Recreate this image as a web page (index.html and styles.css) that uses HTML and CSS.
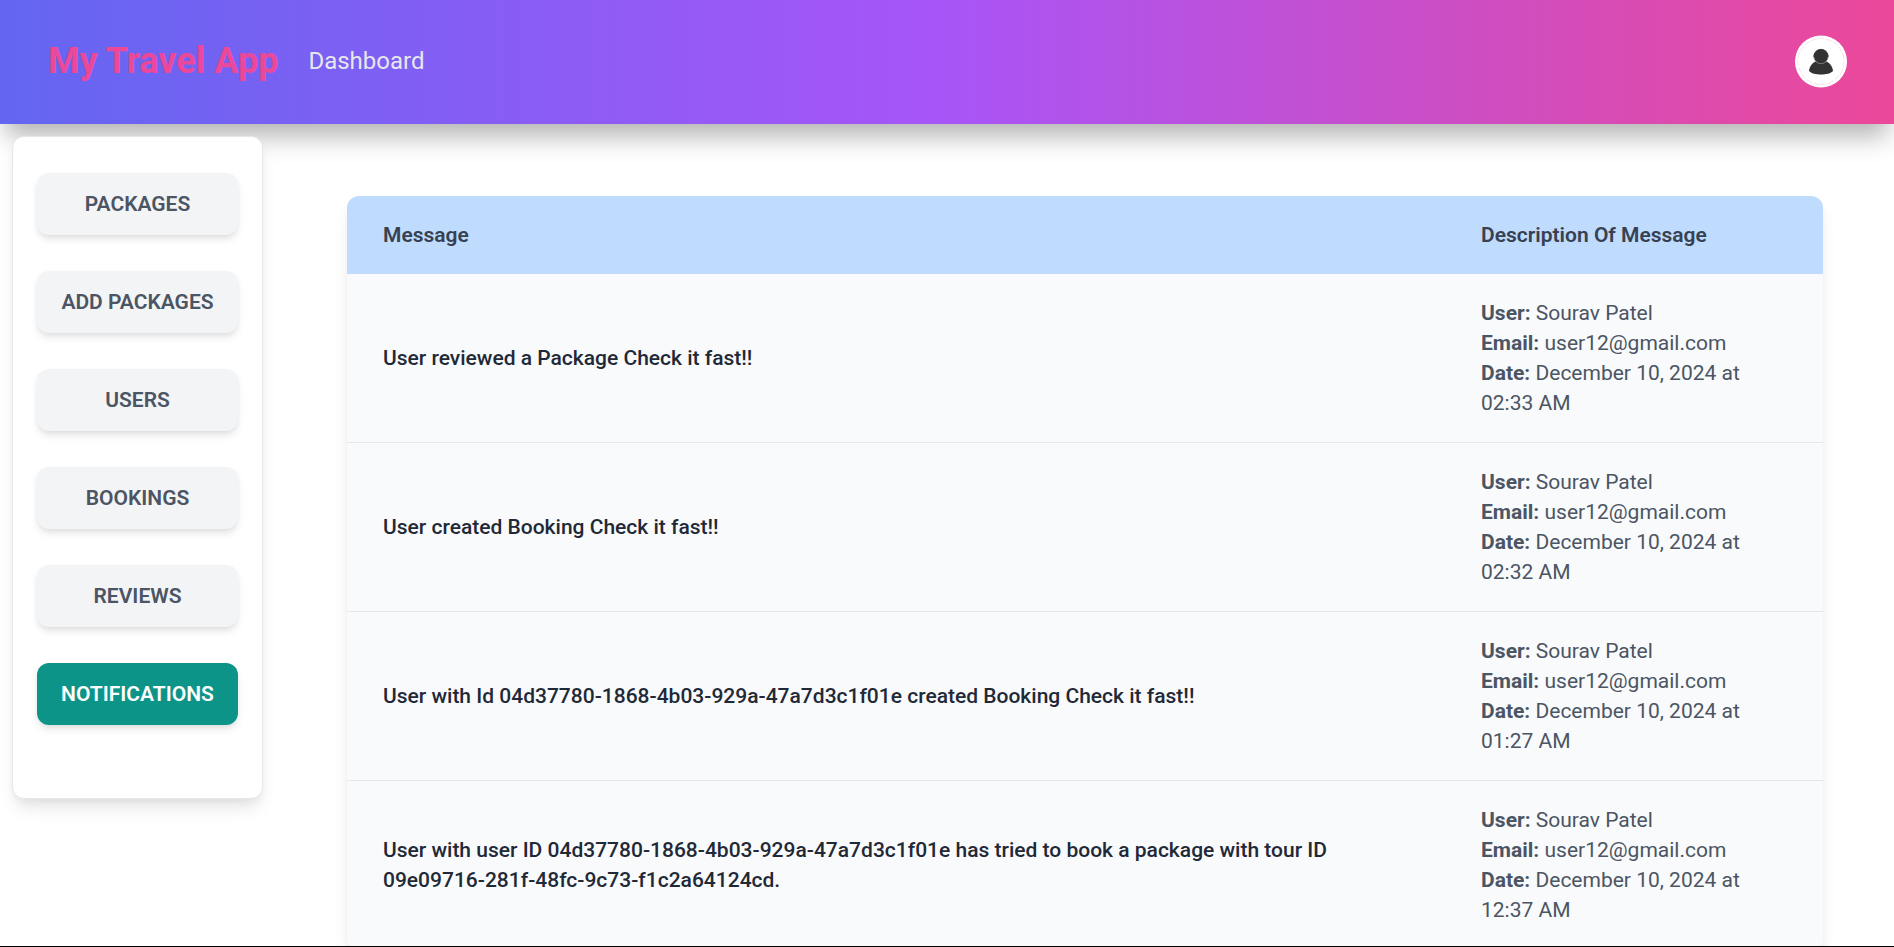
FILE: index.html
```html
<!DOCTYPE html>
<html lang="en">
<head>
<meta charset="utf-8">
<title>My Travel App</title>
<link rel="stylesheet" href="styles.css">
</head>
<body>
<header class="topbar">
  <div class="topbar-left">
    <h1 class="brand">My Travel App</h1>
    <a class="nav-link" href="#">Dashboard</a>
  </div>
  <button class="avatar" type="button" aria-label="Account">
    <svg viewBox="0 0 52 52" aria-hidden="true">
      <circle cx="26" cy="26" r="26" fill="#fff"/>
      <circle cx="26" cy="26" r="23" fill="none" stroke="#f9cfe2" stroke-width=".7" stroke-dasharray="6 1.500"/>
      <path d="M14 35.500C14.500 31 17 27.500 20.500 26h11C35 27.500 37.500 31 38 35.500 36 38 31 39 26 39s-10-1-12-3.500z" fill="#333"/>
      <circle cx="26" cy="21" r="7.200" fill="#333" stroke="#999" stroke-width=".7"/>
      <path d="M18.900 21a7.100 7.100 0 0 1 14.200 0z" fill="#333" stroke="#333" stroke-width=".9"/>
    </svg>
  </button>
</header>
<div class="layout">
  <nav class="sidebar">
    <button class="side-btn" type="button">PACKAGES</button>
    <button class="side-btn" type="button">ADD PACKAGES</button>
    <button class="side-btn" type="button">USERS</button>
    <button class="side-btn" type="button">BOOKINGS</button>
    <button class="side-btn" type="button">REVIEWS</button>
    <button class="side-btn active" type="button">NOTIFICATIONS</button>
  </nav>
  <main class="content">
    <div class="card">
      <table class="messages">
        <thead>
          <tr><th class="col-message">Message</th><th class="col-desc">Description Of Message</th></tr>
        </thead>
        <tbody>
          <tr>
            <td class="message">User reviewed a Package Check it fast!!</td>
            <td><p><strong>User:</strong> Sourav Patel</p><p><strong>Email:</strong> user12@gmail.com</p><p><strong>Date:</strong> December 10, 2024 at 02:33 AM</p></td>
          </tr>
          <tr>
            <td class="message">User created Booking Check it fast!!</td>
            <td><p><strong>User:</strong> Sourav Patel</p><p><strong>Email:</strong> user12@gmail.com</p><p><strong>Date:</strong> December 10, 2024 at 02:32 AM</p></td>
          </tr>
          <tr>
            <td class="message">User with Id 04d37780-1868-4b03-929a-47a7d3c1f01e created Booking Check it fast!!</td>
            <td><p><strong>User:</strong> Sourav Patel</p><p><strong>Email:</strong> user12@gmail.com</p><p><strong>Date:</strong> December 10, 2024 at 01:27 AM</p></td>
          </tr>
          <tr>
            <td class="message">User with user ID 04d37780-1868-4b03-929a-47a7d3c1f01e has tried to book a package with tour ID 09e09716-281f-48fc-9c73-f1c2a64124cd.</td>
            <td><p><strong>User:</strong> Sourav Patel</p><p><strong>Email:</strong> user12@gmail.com</p><p><strong>Date:</strong> December 10, 2024 at 12:37 AM</p></td>
          </tr>
        </tbody>
      </table>
    </div>
  </main>
</div>
</body>
</html>
```
FILE: styles.css
```css
* { box-sizing: border-box; }

body {
  display: flex;
  flex-direction: column;
  height: 100vh;
  margin: 0;
  overflow: hidden;
  border-bottom: 1px solid #000;
  background: #fff;
  font-family: Roboto, "Liberation Sans", sans-serif;
  font-size: 21px;
  line-height: 30px;
}

button { font: inherit; border: 0; cursor: pointer; }
p { margin: 0; }

.topbar {
  display: flex;
  flex: none;
  align-items: center;
  justify-content: space-between;
  padding: 35px 47px 36px 48px;
  background: linear-gradient(to right, #6366f1, #a855f7, #ec4899);
  box-shadow: 0 18px 24px -6px rgba(0, 0, 0, 0.3);
}

.topbar-left { display: flex; align-items: center; gap: 30px; }

.brand {
  margin: 0;
  color: #ec4899;
  font-size: 36px;
  font-weight: 700;
  line-height: 45px;
}

.nav-link { padding-bottom: 2px; color: #e5e7eb; font-size: 24px; text-decoration: none; }

.avatar { width: 52px; height: 53px; padding: 0; border-radius: 50%; background: none; }
.avatar svg { display: block; width: 100%; height: 100%; }

.layout { display: flex; flex: 1; align-items: flex-start; min-height: 0; }

.sidebar {
  display: flex;
  flex: none;
  flex-direction: column;
  gap: 36px;
  width: 251px;
  margin: 12px 0 0 12px;
  padding: 36px 24px 73px;
  border: 1px solid #e5e7eb;
  border-radius: 12px;
  background: #fff;
  box-shadow: 0 12px 18px -4px rgba(0, 0, 0, 0.1), 0 5px 8px -2px rgba(0, 0, 0, 0.05);
}

.side-btn {
  padding: 16px 12px;
  border-radius: 12px;
  background: #f3f4f6;
  color: #4b5563;
  font-weight: 600;
  white-space: nowrap;
  box-shadow: 0 5px 8px -1px rgba(0, 0, 0, 0.1), 0 2px 5px -1px rgba(0, 0, 0, 0.06);
}

.side-btn.active { background: #0d9488; color: #fff; }

.content { flex: 1; min-width: 0; padding: 72px 71px 0 84px; }

.card {
  overflow: hidden;
  border-radius: 12px;
  box-shadow: 0 12px 18px -4px rgba(0, 0, 0, 0.1), 0 5px 8px -2px rgba(0, 0, 0, 0.05);
}

.messages { width: 100%; border-collapse: collapse; background: #f9fafb; table-layout: fixed; }
.messages th { padding: 24px 36px; background: #bfdbfe; color: #374151; font-weight: 600; text-align: left; }
.messages td { padding: 24px 36px; border-bottom: 1px solid #e5e7eb; color: #4b5563; }
.messages .message { color: #1f2937; font-weight: 500; }
.messages strong { font-weight: 700; }
.col-desc { width: 378px; }
```
